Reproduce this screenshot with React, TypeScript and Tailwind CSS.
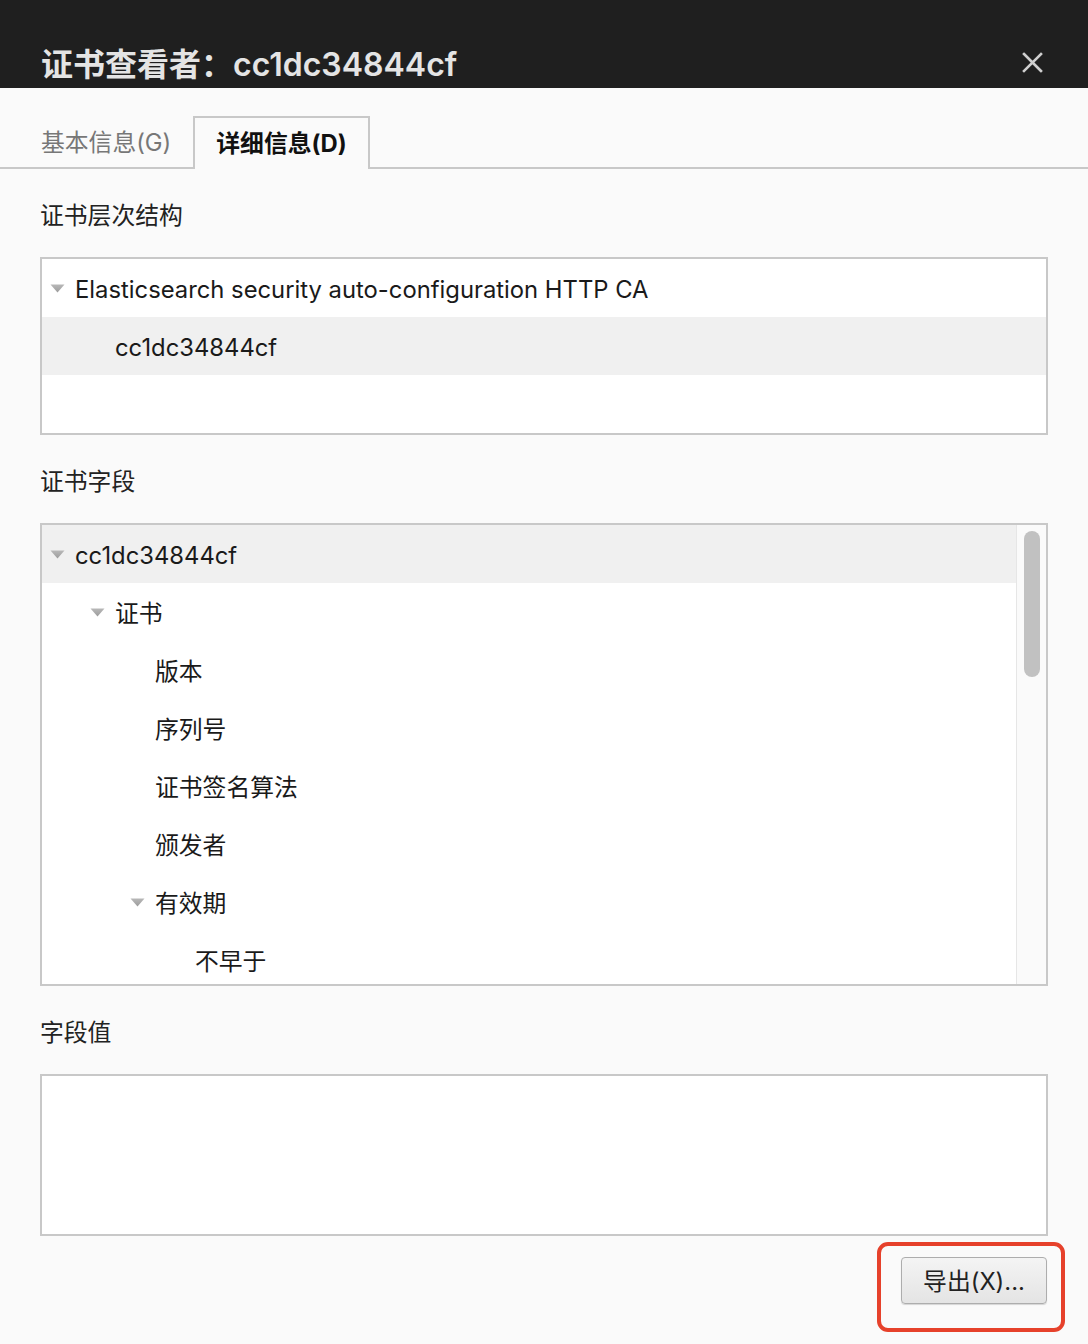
import React from 'react'

// ─── Tree data ──────────────────────────────────────────────

type TreeRow = { label: string; level: number; expandable?: boolean; selected?: boolean }

const HIERARCHY: TreeRow[] = [
  { label: 'Elasticsearch security auto-configuration HTTP CA', level: 0, expandable: true },
  { label: 'cc1dc34844cf', level: 1, selected: true },
]

const FIELDS: TreeRow[] = [
  { label: 'cc1dc34844cf', level: 0, expandable: true, selected: true },
  { label: '证书', level: 1, expandable: true },
  { label: '版本', level: 2 },
  { label: '序列号', level: 2 },
  { label: '证书签名算法', level: 2 },
  { label: '颁发者', level: 2 },
  { label: '有效期', level: 2, expandable: true },
  { label: '不早于', level: 3 },
]

const INDENT = ['pl-[8px]', 'pl-[48px]', 'pl-[88px]', 'pl-[128px]']

function Twisty() {
  return (
    <svg width="15" height="9" viewBox="0 0 15 9" className="shrink-0">
      <defs>
        <linearGradient id="tw" x1="0" y1="0" x2="0" y2="1">
          <stop offset="0" stopColor="#b8b8b8" />
          <stop offset="1" stopColor="#9c9c9c" />
        </linearGradient>
      </defs>
      <polygon points="0.5,0.5 14.5,0.5 7.5,8.5" fill="url(#tw)" />
    </svg>
  )
}

function Row({ row }: { row: TreeRow }) {
  return (
    <div
      className={`h-[58px] shrink-0 flex items-center ${INDENT[row.level]} ${row.selected ? 'bg-[#f0f0f0]' : ''}`}
    >
      <span className="w-[25px] shrink-0 flex items-center">{row.expandable && <Twisty />}</span>
      <span className="pt-[3px] text-[23.8px] leading-[30px] text-[#1a1a1a] whitespace-nowrap">{row.label}</span>
    </div>
  )
}

function SectionLabel({ children }: { children: React.ReactNode }) {
  return <div className="pt-[32px] pb-[26px] text-[23.8px] leading-[30px] text-[#222]">{children}</div>
}

export default function App() {
  return (
    <div
      className="relative w-[1088px] h-[1344px] bg-[#fafafa] overflow-hidden"
      style={{ fontFamily: 'Inter, "Noto Sans CJK SC", sans-serif' }}
    >
      {/* Title bar */}
      <div className="h-[88px] bg-[#1f1f1f] flex items-start justify-between pl-[41px] pr-[45px] pt-[45px]">
        <h1 className="text-[32px] leading-[40px] font-semibold text-[#e4e4e4]">
          证书查看者：cc1dc34844cf
        </h1>
        <svg width="21" height="21" viewBox="0 0 21 21" className="mt-[7px]">
          <path d="M2 2 L19 19 M19 2 L2 19" stroke="#cfcfcf" strokeWidth="2.6" strokeLinecap="square" />
        </svg>
      </div>

      {/* Tabs */}
      <div className="mt-[28px] h-[53px] flex items-end border-b-2 border-[#c8c8c8]">
        <div className="h-[52px] flex items-center pt-[3px] pl-[41px] pr-[22px] text-[23.8px] text-[#777]">基本信息(G)</div>
        <div className="h-[53px] -mb-[2px] flex items-center pt-[1px] px-[21px] border-2 border-b-0 border-[#c8c8c8] bg-[#fafafa] text-[23.8px] font-bold text-[#111]">
          详细信息(D)
        </div>
      </div>

      <div className="px-[40px] flex flex-col">
        <SectionLabel>证书层次结构</SectionLabel>
        <div className="h-[178px] border-2 border-[#c8c8c8] bg-white flex flex-col">
          {HIERARCHY.map((r, i) => (
            <Row key={i} row={r} />
          ))}
        </div>

        <SectionLabel>证书字段</SectionLabel>
        <div className="h-[463px] border-2 border-[#c8c8c8] bg-white flex overflow-hidden">
          <div className="flex-1 flex flex-col overflow-hidden">
            {FIELDS.map((r, i) => (
              <Row key={i} row={r} />
            ))}
          </div>
          {/* Scrollbar */}
          <div className="w-[30px] shrink-0 bg-[#fafafa] border-l border-[#e6e6e6] pt-[6px] pl-[7px]">
            <div className="w-[16px] h-[146px] rounded-full bg-[#c1c1c1]" />
          </div>
        </div>

        <SectionLabel>字段值</SectionLabel>
        <div className="h-[162px] border-2 border-[#c8c8c8] bg-white" />

        <div className="mt-[21px] flex justify-end pr-[1px]">
          <button className="w-[146px] h-[47px] pt-[2px] rounded-[4px] border border-[#adadad] bg-gradient-to-b from-[#f4f4f4] to-[#e4e4e4] shadow-[0_1px_1px_rgba(0,0,0,0.15)] text-[23.8px] text-[#222]">
            导出(X)...
          </button>
        </div>
      </div>

      {/* Highlight annotation */}
      <div className="absolute left-[877px] top-[1242px] w-[188px] h-[90px] border-4 border-[#e6412b] rounded-[11px]" />
    </div>
  )
}
